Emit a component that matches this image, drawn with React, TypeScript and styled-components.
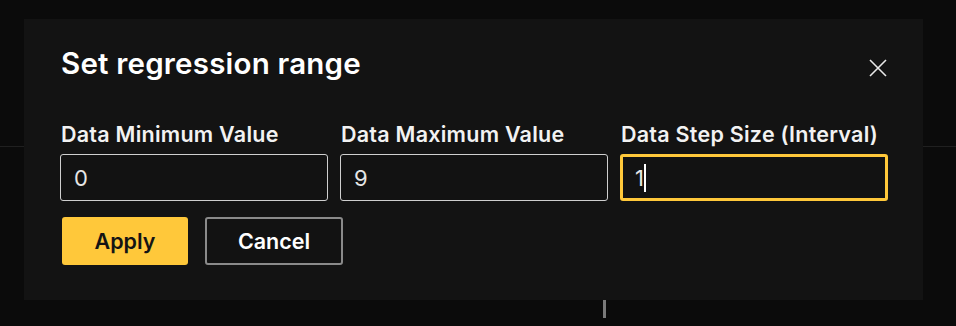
import React from 'react';
import styled, { createGlobalStyle } from 'styled-components';

const GlobalStyle = createGlobalStyle`
  html, body {
    margin: 0;
    padding: 0;
    background: #0b0b0b;
    font-family: Inter, "Noto Sans", sans-serif;
    overflow: hidden;
  }
`;

const Screen = styled.div`
  position: relative;
  width: 956px;
  height: 326px;
  background: #0b0b0b;
`;

const BackdropRule = styled.div`
  height: 146px;
  border-bottom: 1px solid #202020;
`;

const BackdropMarker = styled.div`
  margin: 153px 0 0 603px;
  width: 3px;
  height: 18px;
  background: #7a7a7a;
`;

const Dialog = styled.div`
  position: absolute;
  left: 24px;
  top: 19px;
  width: 899px;
  height: 281px;
  box-sizing: border-box;
  background: #131313;
  padding: 26px 36px 0 36px;
  display: flex;
  flex-direction: column;
`;

const Header = styled.div`
  display: flex;
  justify-content: space-between;
  align-items: flex-start;
`;

const Title = styled.h2`
  margin: 0 0 0 1px;
  color: #ffffff;
  font-size: 29.5px;
  line-height: 36px;
  font-weight: 600;
  letter-spacing: 0.2px;
`;

const CloseButton = styled.button`
  margin: 14px 0 0 0;
  padding: 0;
  width: 18px;
  height: 18px;
  border: none;
  background: none;
  display: flex;
  cursor: pointer;
`;

const Fields = styled.div`
  margin-top: 40px;
  display: grid;
  grid-template-columns: repeat(3, 268px);
  column-gap: 12px;
`;

const Field = styled.label`
  display: flex;
  flex-direction: column;
  gap: 7px;
`;

const Label = styled.span`
  margin-left: 1px;
  color: #f2f2f2;
  font-size: 21.5px;
  line-height: 26px;
  font-weight: 600;
  letter-spacing: 0.25px;
`;

const InputWrap = styled.div`
  position: relative;
`;

const Input = styled.input<{ $active?: boolean }>`
  box-sizing: border-box;
  width: 100%;
  height: 47px;
  padding: 0 ${(p) => (p.$active ? '12px' : '13px')};
  background: #121212;
  color: #e6e6e6;
  font-family: Inter, "Noto Sans", sans-serif;
  font-size: 22px;
  font-weight: 400;
  border: ${(p) => (p.$active ? '3px solid #ffc83a' : '1.5px solid #cfcfcf')};
  border-radius: 3px;
  outline: none;
  caret-color: transparent;
`;

const Caret = styled.span`
  position: absolute;
  left: 24px;
  top: 10px;
  width: 1.5px;
  height: 28px;
  background: #ffffff;
`;

const Actions = styled.div`
  margin-top: 16px;
  padding-left: 2px;
  display: flex;
  gap: 17px;
`;

const Button = styled.button<{ $primary?: boolean }>`
  box-sizing: border-box;
  height: 48px;
  width: ${(p) => (p.$primary ? '126px' : '138px')};
  border-radius: 3px;
  font-family: Inter, "Noto Sans", sans-serif;
  font-size: 21.5px;
  font-weight: 600;
  cursor: pointer;
  background: ${(p) => (p.$primary ? '#ffc83a' : '#121212')};
  color: ${(p) => (p.$primary ? '#141414' : '#ffffff')};
  border: ${(p) => (p.$primary ? 'none' : '2px solid #8a8a8a')};
`;

const fields = [
  { label: 'Data Minimum Value', value: '0' },
  { label: 'Data Maximum Value', value: '9' },
  { label: 'Data Step Size (Interval)', value: '1', active: true },
];

export default function App() {
  return (
    <Screen>
      <GlobalStyle />
      <BackdropRule />
      <BackdropMarker />
      <Dialog>
        <Header>
          <Title>Set regression range</Title>
          <CloseButton aria-label="Close">
            <svg width="18" height="18" viewBox="0 0 18 18">
              <path d="M1 1 L17 17 M17 1 L1 17" stroke="#e8e8e8" strokeWidth="1.6" fill="none" />
            </svg>
          </CloseButton>
        </Header>
        <Fields>
          {fields.map((f) => (
            <Field key={f.label}>
              <Label>{f.label}</Label>
              <InputWrap>
                <Input $active={f.active} defaultValue={f.value} />
                {f.active && <Caret />}
              </InputWrap>
            </Field>
          ))}
        </Fields>
        <Actions>
          <Button $primary>Apply</Button>
          <Button>Cancel</Button>
        </Actions>
      </Dialog>
    </Screen>
  );
}
